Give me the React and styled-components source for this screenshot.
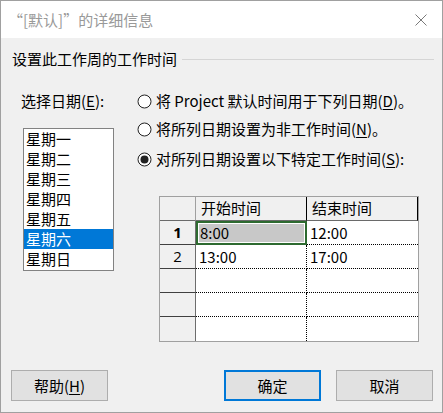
import React from 'react';
import styled, { createGlobalStyle } from 'styled-components';

const GlobalStyle = createGlobalStyle`
  html, body {
    margin: 0;
    padding: 0;
    background: #ffffff;
  }
  * {
    box-sizing: border-box;
  }
`;

const font = `"Noto Sans CJK SC", "Noto Sans", sans-serif`;

const Window = styled.div`
  width: 443px;
  height: 413px;
  border: 1px solid #a0a0a0;
  display: flex;
  flex-direction: column;
  font-family: ${font};
  font-size: 15px;
  color: #000;
`;

const TitleBar = styled.div`
  height: 37px;
  background: #fff;
  display: flex;
  align-items: center;
  justify-content: space-between;
  padding: 0 15px 0 7px;
`;

const Title = styled.span`
  color: #999;
  line-height: 20px;
`;

const Body = styled.div`
  flex: 1;
  background: #f0f0f0;
  display: flex;
  flex-direction: column;
  padding: 11px 0 11px 0;
`;

const GroupHeader = styled.div`
  display: flex;
  align-items: center;
  gap: 5px;
  padding: 0 8px 0 11px;
  line-height: 20px;
  &::after {
    content: '';
    flex: 1;
    height: 1px;
    background: #d5d5d5;
  }
`;

const Content = styled.div`
  display: flex;
  padding: 22px 0 0 20px;
  flex: 1;
`;

const LeftCol = styled.div`
  width: 116px;
  flex-shrink: 0;
  display: flex;
  flex-direction: column;
`;

const Label = styled.div`
  line-height: 20px;
`;

const ListBox = styled.div`
  margin: 17px 0 0 2px;
  width: 91px;
  height: 143px;
  border: 1px solid #828282;
  background: #fff;
`;

const ListItem = styled.div`
  height: 20px;
  line-height: 20px;
  padding-left: 2px;
  background: ${(p) => (p.$selected ? '#0078d7' : 'transparent')};
  color: ${(p) => (p.$selected ? '#fff' : '#000')};
`;

const RightCol = styled.div`
  display: flex;
  flex-direction: column;
`;

const RadioRow = styled.div`
  display: flex;
  align-items: center;
  gap: 4px;
  height: 20px;
  line-height: 20px;
  margin-top: ${(p) => p.$gap || 0}px;
  white-space: nowrap;
  svg {
    flex-shrink: 0;
    display: block;
  }
`;

const U = styled.span`
  text-decoration: underline;
  text-underline-offset: 2px;
`;

const Grid = styled.div`
  margin: 27px 0 0 22px;
  width: 260px;
  border: 1px solid #a0a0a0;
  display: grid;
  grid-template-columns: 36px 111px 111px;
  grid-auto-rows: 24px;
  background: #fff;
`;

const HeadCell = styled.div`
  background: #f0f0f0;
  border-bottom: 1px solid #6a6a6a;
  border-right: 1px solid ${(p) => (p.$corner ? '#a0a0a0' : '#000')};
  padding-left: 5px;
  line-height: 22px;
`;

const RowHead = styled.div`
  background: #f0f0f0;
  border-bottom: ${(p) => (p.$last ? 'none' : '1px solid #404040')};
  border-right: 1px solid #6d6d6d;
  text-align: center;
  line-height: 23px;
  font-family: "Open Sans", "Noto Sans", sans-serif;
  font-weight: ${(p) => (p.$active ? 700 : 400)};
`;

const Cell = styled.div`
  border-bottom: ${(p) => (p.$last ? 'none' : '1px dotted #000')};
  border-right: ${(p) => (p.$first ? '1px dotted #000' : 'none')};
  padding-left: 3px;
  line-height: 23px;
  ${(p) =>
    p.$active &&
    `
    border: 2px solid #2d6a30;
    background: #c8c8c8;
    box-shadow: inset 0 0 0 1px #fff;
    padding-left: 2px;
    line-height: 20px;
  `}
`;

const Footer = styled.div`
  display: flex;
  justify-content: space-between;
  padding: 0 9px 0 10px;
`;

const ButtonGroup = styled.div`
  display: flex;
  gap: 15px;
`;

const Button = styled.button`
  width: 97px;
  height: 31px;
  background: #e1e1e1;
  border: ${(p) => (p.$default ? '2px solid #0078d7' : '1px solid #adadad')};
  font-family: ${font};
  font-size: 15px;
  color: #000;
  padding: 0;
  line-height: 20px;
`;

const days = ['星期一', '星期二', '星期三', '星期四', '星期五', '星期六', '星期日'];
const rows = [
  ['8:00', '12:00'],
  ['13:00', '17:00'],
  ['', ''],
  ['', ''],
  ['', ''],
];

function CloseIcon() {
  return (
    <svg width="12" height="12" viewBox="0 0 12 12">
      <path d="M0.5 0.5 L11.5 11.5 M11.5 0.5 L0.5 11.5" stroke="#7a7a7a" strokeWidth="1" />
    </svg>
  );
}

function Radio({ checked }) {
  return (
    <svg width="15" height="15" viewBox="0 0 15 15">
      <circle cx="7.5" cy="7.5" r="6.5" fill="#fff" stroke="#222" strokeWidth="1" />
      {checked && <circle cx="7.5" cy="7.5" r="4" fill="#222" />}
    </svg>
  );
}

export default function App() {
  return (
    <>
      <GlobalStyle />
      <Window>
        <TitleBar>
          <Title>“[默认]”的详细信息</Title>
          <CloseIcon />
        </TitleBar>
        <Body>
          <GroupHeader>设置此工作周的工作时间</GroupHeader>
          <Content>
            <LeftCol>
              <Label>
                选择日期(<U>E</U>):
              </Label>
              <ListBox>
                {days.map((d) => (
                  <ListItem key={d} $selected={d === '星期六'}>
                    {d}
                  </ListItem>
                ))}
              </ListBox>
            </LeftCol>
            <RightCol>
              <RadioRow>
                <Radio />
                <span>
                  将 Project 默认时间用于下列日期(<U>D</U>)。
                </span>
              </RadioRow>
              <RadioRow $gap={8}>
                <Radio />
                <span>
                  将所列日期设置为非工作时间(<U>N</U>)。
                </span>
              </RadioRow>
              <RadioRow $gap={10}>
                <Radio checked />
                <span>
                  对所列日期设置以下特定工作时间(<U>S</U>):
                </span>
              </RadioRow>
              <Grid>
                <HeadCell $corner />
                <HeadCell>开始时间</HeadCell>
                <HeadCell>结束时间</HeadCell>
                {rows.map((r, i) => {
                  const last = i === rows.length - 1;
                  return (
                    <React.Fragment key={i}>
                      <RowHead $last={last} $active={i === 0}>
                        {r[0] ? i + 1 : ''}
                      </RowHead>
                      <Cell $first $last={last} $active={i === 0}>
                        {r[0]}
                      </Cell>
                      <Cell $last={last}>{r[1]}</Cell>
                    </React.Fragment>
                  );
                })}
              </Grid>
            </RightCol>
          </Content>
          <Footer>
            <Button>
              帮助(<U>H</U>)
            </Button>
            <ButtonGroup>
              <Button $default>确定</Button>
              <Button>取消</Button>
            </ButtonGroup>
          </Footer>
        </Body>
      </Window>
    </>
  );
}
